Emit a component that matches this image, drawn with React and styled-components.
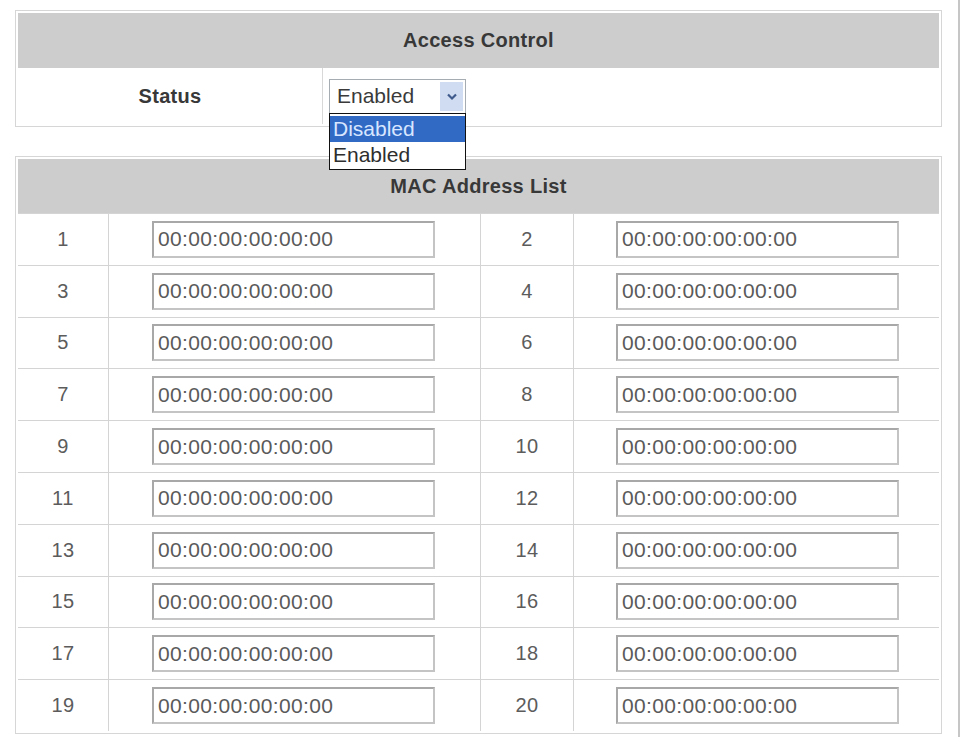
import React from "react";
import styled, { createGlobalStyle, css } from "styled-components";

const GlobalStyle = createGlobalStyle`
  html, body {
    margin: 0;
    padding: 0;
    background: #ffffff;
  }
  body {
    font-family: "Liberation Sans", Arial, sans-serif;
    color: #333333;
  }
`;

const Frame = styled.div`
  width: 960px;
  min-height: 737px;
  box-sizing: border-box;
  border-right: 2px solid #c6c6c6;
  padding: 10px 0 0 15px;
`;

const Panel = styled.section`
  width: 927px;
  box-sizing: border-box;
  border: 1px solid #d6d6d6;
  padding: 2px;
  background: #ffffff;

  & + & {
    margin-top: 29px;
  }
`;

const HeaderBar = styled.div`
  height: ${(p) => p.$height}px;
  background: #cdcdcd;
  display: flex;
  align-items: center;
  justify-content: center;
  font-size: 20px;
  font-weight: bold;
  color: #383838;
  letter-spacing: 0.3px;
`;

const StatusRow = styled.div`
  display: grid;
  grid-template-columns: 305px 1fr;
  height: 56px;
`;

const StatusLabel = styled.div`
  display: flex;
  align-items: center;
  justify-content: center;
  border-right: 1px solid #d8d8d8;
  font-size: 20px;
  font-weight: bold;
  color: #383838;
  letter-spacing: 0.3px;
`;

const StatusField = styled.div`
  display: flex;
  align-items: center;
  padding-left: 6px;
`;

const SelectBox = styled.div`
  position: relative;
  width: 137px;
  height: 35px;
  box-sizing: border-box;
  border: 1px solid #a5acb2;
  display: flex;
  align-items: center;
  padding-left: 7px;
  font-size: 21px;
  color: #3a3a3a;
  background: #ffffff;
`;

const ArrowButton = styled.span`
  margin-left: auto;
  margin-right: 2px;
  width: 23px;
  height: 29px;
  background: #cfdcf2;
  display: flex;
  align-items: center;
  justify-content: center;
`;

const DropList = styled.div`
  position: absolute;
  top: 100%;
  left: -1px;
  width: 137px;
  box-sizing: border-box;
  border: 1px solid #111111;
  background: #ffffff;
  padding: 2px 0 1px;
  z-index: 2;
`;

const OptionItem = styled.div`
  height: 26px;
  line-height: 26px;
  padding-left: 3px;
  font-size: 21px;
  color: #2e2e2e;
  ${(p) =>
    p.$active &&
    css`
      background: #316ac5;
      color: #d8e6ff;
    `}
`;

const MacGrid = styled.div`
  display: grid;
  grid-template-columns: 90px 372px 93px 366px;
  grid-auto-rows: 51.8px;
`;

const Cell = styled.div`
  display: flex;
  align-items: center;
  box-sizing: border-box;
  border-top: 1px solid #d4d4d4;
  ${(p) => !p.$first && "border-left: 1px solid #d4d4d4;"}
  ${(p) =>
    p.$index
      ? css`
          justify-content: center;
          font-size: 20px;
          color: #5c5c5c;
          letter-spacing: 0.5px;
        `
      : css`
          padding-left: ${p.$inset}px;
        `}
`;

const MacInput = styled.input`
  width: 283px;
  height: 37px;
  box-sizing: border-box;
  border: 2px solid #a8a8a8;
  border-right-color: #c4c4c4;
  border-bottom-color: #c4c4c4;
  padding: 0 0 0 4px;
  font-family: "Liberation Sans", Arial, sans-serif;
  font-size: 21px;
  letter-spacing: 0.35px;
  color: #5a5a5a;
  background: #ffffff;
  outline: none;
`;

const Chevron = () => (
  <svg width="12" height="9" viewBox="0 0 12 9" aria-hidden="true">
    <path d="M2 2.5 L6 6.5 L10 2.5" fill="none" stroke="#3f5a8c" strokeWidth="2.2" />
  </svg>
);

const rows = Array.from({ length: 10 }, (_, i) => [i * 2 + 1, i * 2 + 2]);

export default function App() {
  return (
    <>
      <GlobalStyle />
      <Frame>
        <Panel>
          <HeaderBar $height={55}>Access Control</HeaderBar>
          <StatusRow>
            <StatusLabel>Status</StatusLabel>
            <StatusField>
              <SelectBox>
                Enabled
                <ArrowButton>
                  <Chevron />
                </ArrowButton>
                <DropList>
                  <OptionItem $active>Disabled</OptionItem>
                  <OptionItem>Enabled</OptionItem>
                </DropList>
              </SelectBox>
            </StatusField>
          </StatusRow>
        </Panel>

        <Panel>
          <HeaderBar $height={54}>MAC Address List</HeaderBar>
          <MacGrid>
            {rows.map(([a, b]) => (
              <React.Fragment key={a}>
                <Cell $index $first>{a}</Cell>
                <Cell $inset={43}>
                  <MacInput readOnly value="00:00:00:00:00:00" />
                </Cell>
                <Cell $index>{b}</Cell>
                <Cell $inset={42}>
                  <MacInput readOnly value="00:00:00:00:00:00" />
                </Cell>
              </React.Fragment>
            ))}
          </MacGrid>
        </Panel>
      </Frame>
    </>
  );
}
